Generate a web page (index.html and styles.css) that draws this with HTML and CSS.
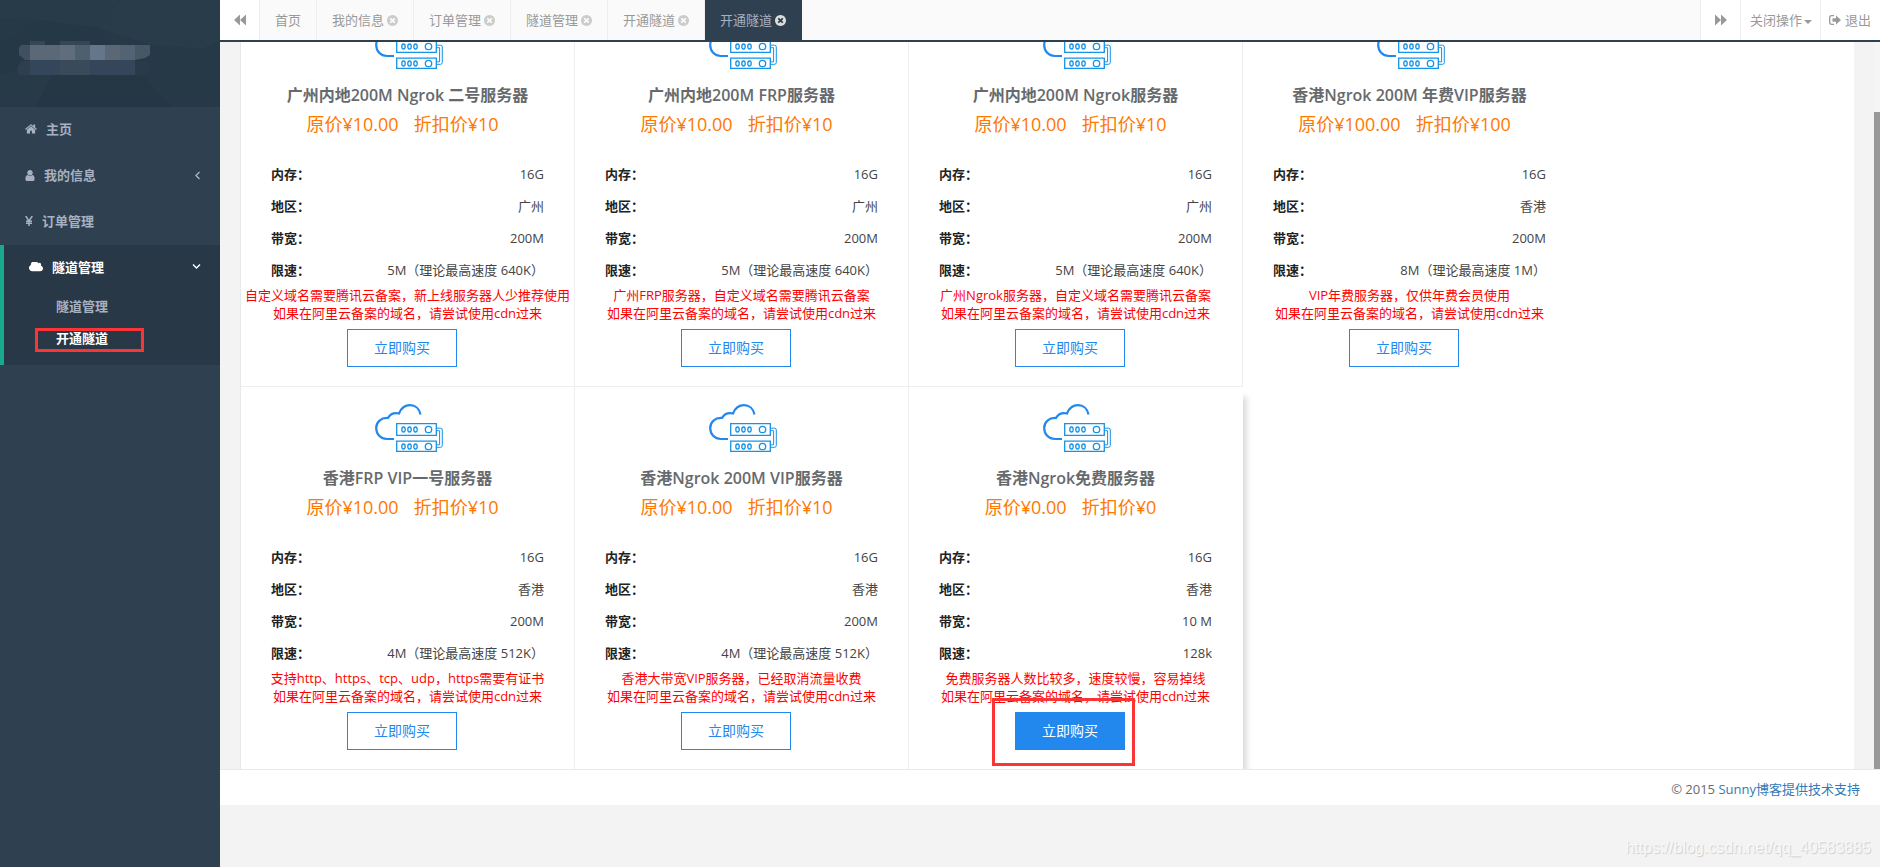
FILE: index.html
```html
<!DOCTYPE html>
<html lang="zh-CN">
<head>
<meta charset="utf-8">
<title>开通隧道</title>
<link rel="stylesheet" href="styles.css">
</head>
<body>
<svg class="sprite" aria-hidden="true">
  <symbol id="i-close" viewBox="128 128 1536 1536"><path d="M1277 1122q0-26-19-45l-181-181 181-181q19-19 19-45 0-27-19-46l-90-90q-19-19-46-19-26 0-45 19l-181 181-181-181q-19-19-45-19-27 0-46 19l-90 90q-19 19-19 46 0 26 19 45l181 181-181 181q-19 19-19 45 0 27 19 46l90 90q19 19 46 19 26 0 45-19l181-181 181 181q19 19 45 19 27 0 46-19l90-90q19-19 19-46zm387-226q0 209-103 385.5t-279.5 279.5-385.5 103-385.5-103-279.5-279.5-103-385.5 103-385.5 279.5-279.5 385.5-103 385.5 103 279.5 279.5 103 385.5z"/></symbol>
  <symbol id="i-server" viewBox="0 0 68 48">
    <path d="M19 35H12C5.500 35 1.200 30 1.200 24C1.200 18 6 13.500 13 14C15 10.500 19 8.500 24 9.500C26 4.500 30 1.200 35 1.200C40.500 1.200 44.500 5 45.500 10.500" fill="none" stroke="#2288ee" stroke-width="2.200"/>
    <g fill="none" stroke="#1593e6" stroke-width="1.300">
      <path d="M21.700 19.700H61.300V31.300H21.700ZM21.700 37.200H61.300V47.300H21.700Z"/>
      <path d="M61.500 24.200H65.500Q67.300 24.200 67.300 26V41.500Q67.300 43.300 65.500 43.300H61.500M61.500 26.700H64.600V40.800H61.500" stroke-width="1"/>
      <ellipse cx="28.500" cy="25.500" rx="1.700" ry="2.500"/><ellipse cx="34.500" cy="25.500" rx="1.700" ry="2.500"/><ellipse cx="40.500" cy="25.500" rx="1.700" ry="2.500"/><circle cx="53.500" cy="25.500" r="3.200"/>
      <ellipse cx="28.500" cy="42.500" rx="1.700" ry="2.500"/><ellipse cx="34.500" cy="42.500" rx="1.700" ry="2.500"/><ellipse cx="40.500" cy="42.500" rx="1.700" ry="2.500"/><circle cx="53.500" cy="42.500" r="3.200"/>
    </g>
  </symbol>
</svg>
<div class="app">
  <aside class="sidebar">
    <div class="profile">
      <svg class="pattern" viewBox="0 0 220 107" preserveAspectRatio="none" aria-hidden="true">
        <path fill="#273b49" d="M0 0H120L98 28L50 22L0 18Z"/>
        <path fill="#283c4a" d="M120 0H220V50L150 45L98 28Z"/>
        <path fill="#253846" d="M0 42L40 20L98 28L112 42L60 60L0 75Z"/>
        <path fill="#273a48" d="M0 75L60 60L36 107H0Z"/>
        <path fill="#253745" d="M60 60L145 78L172 107H36Z"/>
        <path fill="#263947" d="M145 78L220 40V107H172Z"/>
      </svg>
      <svg class="mosaic" viewBox="0 0 136 34" aria-hidden="true">
        <path fill="#40505e" d="M4 4H13V19H8L2 14V7Z"/>
        <path fill="#354655" d="M13 0H28V4H13ZM43 0H73V4H43Z"/>
        <path fill="#5a6877" d="M13 4H58V19H13Z"/><path fill="#606e7b" d="M43 4H58V19H43Z"/>
        <path fill="#4e5f70" d="M58 4H73V19H58Z"/><path fill="#64778a" d="M73 4H88V19H73Z"/>
        <path fill="#5b6774" d="M88 4H103V19H88Z"/><path fill="#526473" d="M103 4H118V19H103Z"/>
        <path fill="#465866" d="M118 4H133V14L128 17L118 19Z"/>
        <path fill="#2e3f50" d="M4 20L13 19V34H2L0 27Z"/><path fill="#33465a" d="M13 19H43V34H13Z"/>
        <path fill="#394b5b" d="M43 19H73V34H43Z"/><path fill="#34475a" d="M73 19H118V34H73Z"/>
        <path fill="#293b4b" d="M118 20H130L134 27L130 34H118Z"/>
      </svg>
    </div>
    <nav>
      <a class="item" href="#"><svg class="i-home" viewBox="64 224 1664 1344"><path d="M1472 992v480q0 26-19 45t-45 19h-384v-384h-256v384h-384q-26 0-45-19t-19-45v-480q0-1 .5-3t.5-3l575-474 575 474q1 2 1 6zm223-69l-62 74q-8 9-21 11h-3q-13 0-21-7l-692-577-692 577q-12 8-24 7-13-2-21-11l-62-74q-8-10-7-23.5t11-21.5l719-599q32-26 76-26t76 26l244 204v-195q0-14 9-23t23-9h192q14 0 23 9t9 23v408l219 182q10 8 11 21.500t-7 23.500z"/></svg>主页</a>
      <a class="item" href="#"><svg class="i-user" viewBox="256 128 1280 1536"><path d="M1536 1399q0 109-62.500 187t-150.500 78h-854q-88 0-150.500-78t-62.500-187q0-85 8.500-160.500t31.500-152 58.500-131 94-89 134.500-34.500q131 128 313 128t313-128q76 0 134.500 34.500t94 89 58.500 131 31.500 152 8.500 160.500zm-256-887q0 159-112.500 271.500t-271.500 112.500-271.500-112.500-112.500-271.500 112.500-271.500 271.500-112.500 271.500 112.500 112.500 271.500z"/></svg>我的信息<svg class="arrow" viewBox="0 0 7 9"><path d="M5.500 1L2 4.500L5.500 8"/></svg></a>
      <a class="item" href="#"><svg class="i-yen" viewBox="0 0 8 10"><path d="M.7 0L4 5L7.300 0M4 4.500V10M1 5.200H7M1 7.300H7" fill="none" stroke="currentColor" stroke-width="1.500"/></svg>订单管理</a>
      <div class="active">
        <a class="item" href="#"><svg class="i-cloud" viewBox="-64 384 1920 1152"><path d="M1856 1152q0 159-112.500 271.500t-271.500 112.500h-1088q-185 0-316.500-131.500t-131.500-316.500q0-132 71-241.500t187-163.500q-2-28-2-43 0-212 150-362t362-150q158 0 286.500 88t187.500 230q70-62 166-62 106 0 181 75t75 181q0 75-41 138 129 30 213 134.500t84 239.500z"/></svg>隧道管理<svg class="arrow down" viewBox="0 0 9 7"><path d="M1 1.500L4.500 5L8 1.500"/></svg></a>
        <a class="sub" href="#">隧道管理</a>
        <a class="sub current" href="#">开通隧道<span class="mark mark-menu"></span></a>
      </div>
    </nav>
  </aside>

  <div class="main">
    <header class="tabs">
      <button class="roll" aria-label="左移"><svg viewBox="0 0 12 12"><path d="M6 .5V11.500L0 6ZM12 .5V11.500L6 6Z"/></svg></button>
      <div class="tablist">
        <a class="tab" href="#">首页</a>
        <a class="tab" href="#">我的信息<svg><use href="#i-close"/></svg></a>
        <a class="tab" href="#">订单管理<svg><use href="#i-close"/></svg></a>
        <a class="tab" href="#">隧道管理<svg><use href="#i-close"/></svg></a>
        <a class="tab" href="#">开通隧道<svg><use href="#i-close"/></svg></a>
        <a class="tab on" href="#">开通隧道<svg><use href="#i-close"/></svg></a>
      </div>
      <button class="roll right" aria-label="右移"><svg viewBox="0 0 12 12"><path d="M0 .5V11.500L6 6ZM6 .5V11.500L12 6Z"/></svg></button>
      <button class="ops">关闭操作<span class="caret"></span></button>
      <a class="exit" href="#"><svg viewBox="0 0 12 10"><path d="M5 .700H2.500Q.7.700.7 2.500V7.500Q.7 9.300 2.500 9.300H5" fill="none" stroke="currentColor" stroke-width="1.300"/><path d="M3.500 3.200H7V.5L12 5L7 9.500V6.800H3.500Z"/></svg>退出</a>
    </header>

    <main class="viewport">
      <div class="panel">
        <section class="card">
          <svg class="server"><use href="#i-server"/></svg>
          <h3>广州内地200M Ngrok 二号服务器</h3>
          <p class="price"><span>原价¥10.00</span><span>折扣价¥10</span></p>
          <dl><div><dt>内存：</dt><dd>16G</dd></div><div><dt>地区：</dt><dd>广州</dd></div><div><dt>带宽：</dt><dd>200M</dd></div><div><dt>限速：</dt><dd>5M（理论最高速度 640K）</dd></div></dl>
          <p class="note">自定义域名需要腾讯云备案，新上线服务器人少推荐使用<br>如果在阿里云备案的域名，请尝试使用cdn过来</p>
          <div class="buy"><button>立即购买</button></div>
        </section>
        <section class="card">
          <svg class="server"><use href="#i-server"/></svg>
          <h3>广州内地200M FRP服务器</h3>
          <p class="price"><span>原价¥10.00</span><span>折扣价¥10</span></p>
          <dl><div><dt>内存：</dt><dd>16G</dd></div><div><dt>地区：</dt><dd>广州</dd></div><div><dt>带宽：</dt><dd>200M</dd></div><div><dt>限速：</dt><dd>5M（理论最高速度 640K）</dd></div></dl>
          <p class="note">广州FRP服务器，自定义域名需要腾讯云备案<br>如果在阿里云备案的域名，请尝试使用cdn过来</p>
          <div class="buy"><button>立即购买</button></div>
        </section>
        <section class="card">
          <svg class="server"><use href="#i-server"/></svg>
          <h3>广州内地200M Ngrok服务器</h3>
          <p class="price"><span>原价¥10.00</span><span>折扣价¥10</span></p>
          <dl><div><dt>内存：</dt><dd>16G</dd></div><div><dt>地区：</dt><dd>广州</dd></div><div><dt>带宽：</dt><dd>200M</dd></div><div><dt>限速：</dt><dd>5M（理论最高速度 640K）</dd></div></dl>
          <p class="note">广州Ngrok服务器，自定义域名需要腾讯云备案<br>如果在阿里云备案的域名，请尝试使用cdn过来</p>
          <div class="buy"><button>立即购买</button></div>
        </section>
        <section class="card plain">
          <svg class="server"><use href="#i-server"/></svg>
          <h3>香港Ngrok 200M 年费VIP服务器</h3>
          <p class="price"><span>原价¥100.00</span><span>折扣价¥100</span></p>
          <dl><div><dt>内存：</dt><dd>16G</dd></div><div><dt>地区：</dt><dd>香港</dd></div><div><dt>带宽：</dt><dd>200M</dd></div><div><dt>限速：</dt><dd>8M（理论最高速度 1M）</dd></div></dl>
          <p class="note">VIP年费服务器，仅供年费会员使用<br>如果在阿里云备案的域名，请尝试使用cdn过来</p>
          <div class="buy"><button>立即购买</button></div>
        </section>
        <section class="card last">
          <svg class="server"><use href="#i-server"/></svg>
          <h3>香港FRP VIP一号服务器</h3>
          <p class="price"><span>原价¥10.00</span><span>折扣价¥10</span></p>
          <dl><div><dt>内存：</dt><dd>16G</dd></div><div><dt>地区：</dt><dd>香港</dd></div><div><dt>带宽：</dt><dd>200M</dd></div><div><dt>限速：</dt><dd>4M（理论最高速度 512K）</dd></div></dl>
          <p class="note">支持http、https、tcp、udp，https需要有证书<br>如果在阿里云备案的域名，请尝试使用cdn过来</p>
          <div class="buy"><button>立即购买</button></div>
        </section>
        <section class="card last">
          <svg class="server"><use href="#i-server"/></svg>
          <h3>香港Ngrok 200M VIP服务器</h3>
          <p class="price"><span>原价¥10.00</span><span>折扣价¥10</span></p>
          <dl><div><dt>内存：</dt><dd>16G</dd></div><div><dt>地区：</dt><dd>香港</dd></div><div><dt>带宽：</dt><dd>200M</dd></div><div><dt>限速：</dt><dd>4M（理论最高速度 512K）</dd></div></dl>
          <p class="note">香港大带宽VIP服务器，已经取消流量收费<br>如果在阿里云备案的域名，请尝试使用cdn过来</p>
          <div class="buy"><button>立即购买</button></div>
        </section>
        <section class="card plain hover">
          <svg class="server"><use href="#i-server"/></svg>
          <h3>香港Ngrok免费服务器</h3>
          <p class="price"><span>原价¥0.00</span><span>折扣价¥0</span></p>
          <dl><div><dt>内存：</dt><dd>16G</dd></div><div><dt>地区：</dt><dd>香港</dd></div><div><dt>带宽：</dt><dd>10 M</dd></div><div><dt>限速：</dt><dd>128k</dd></div></dl>
          <p class="note">免费服务器人数比较多，速度较慢，容易掉线<br>如果在阿里云备案的域名，请尝试使用cdn过来</p>
          <div class="buy"><button>立即购买</button><span class="mark mark-buy"></span></div>
        </section>
      </div>
      <div class="scrollbar"><div class="thumb"></div></div>
    </main>

    <footer class="footer"><span>© 2015 <a href="#">Sunny博客提供技术支持</a></span></footer>
    <div class="watermark">https://blog.csdn.net/qq_40583885</div>
  </div>
</div>
</body>
</html>
```
FILE: styles.css
```css
* { box-sizing: border-box; }
body {
  margin: 0;
  font: 13px/18px "Open Sans", "Noto Sans CJK SC", sans-serif;
  color: #676a6c;
  background: #f3f3f4;
}
a { text-decoration: none; color: inherit; }
button { font: inherit; color: inherit; padding: 0; border: 0; background: none; cursor: pointer; }
h3, p, dl, dd { margin: 0; }
svg { fill: currentColor; flex: none; }
.sprite { position: absolute; width: 0; height: 0; }

.app { display: flex; height: 100vh; overflow: hidden; }

/* sidebar */
.sidebar { flex: 0 0 220px; background: #2f4050; color: #a7b1c2; }
.profile { position: relative; height: 107px; padding: 41px 17px; background: #263947; overflow: hidden; }
.pattern { position: absolute; inset: 0; width: 100%; height: 100%; }
.mosaic { position: relative; display: block; width: 136px; height: 34px; }
.item { display: flex; align-items: center; height: 46px; padding: 0 19px 2px 25px; font-weight: 600; }
.i-home { width: 12px; height: 10px; margin-right: 9px; }
.i-user { width: 10px; height: 11px; margin-right: 9px; }
.i-yen { width: 8px; height: 10px; margin-right: 9px; }
.i-cloud { width: 14px; height: 10px; margin-right: 9px; }
.arrow { width: 7px; height: 9px; margin-left: auto; }
.arrow.down { width: 9px; height: 7px; }
.arrow path { fill: none; stroke: currentColor; stroke-width: 1.400; }
.active { border-left: 4px solid #19aa8d; background: #293846; padding-bottom: 11px; }
.active .item { height: 45px; color: #fff; }
.sub { position: relative; display: block; padding-left: 52px; line-height: 32px; font-weight: 600; }
.sub.current { color: #fff; }
.mark { position: absolute; border: 3px solid #fb3535; pointer-events: none; }
.mark-menu { left: 31px; top: 6px; width: 109px; height: 24px; }

/* tab bar */
.main { flex: 1; min-width: 0; display: flex; flex-direction: column; }
.tabs { flex: none; display: flex; height: 42px; border-bottom: 2px solid #2f4050; background: #fafafa; color: #999; line-height: 40px; }
.roll { display: flex; align-items: center; justify-content: center; width: 40px; background: #fff; border-right: 1px solid #eee; }
.roll.right { border-left: 1px solid #eee; border-right: 0; }
.roll svg { width: 12px; height: 12px; }
.tablist { flex: 1; display: flex; }
.tab { display: flex; align-items: center; padding: 0 15px; border-right: 1px solid #eee; }
.tab svg { width: 11px; height: 11px; margin-left: 3px; color: #ccc; }
.tab.on { background: #2f4050; color: #a7b1c2; border-color: #2f4050; }
.tab.on svg { color: #ddd; }
.ops { display: flex; align-items: center; width: 80px; padding-left: 9px; background: #fff; border-left: 1px solid #eee; }
.caret { margin: 3px 0 0 2px; border: 4px solid transparent; border-top-color: #999; border-bottom: 0; }
.exit { display: flex; align-items: center; width: 60px; padding-left: 8px; background: #fff; border-left: 1px solid #eee; }
.exit svg { width: 12px; height: 10px; margin-right: 4px; }

/* the list is scrolled to its end */
.viewport { flex: 1; min-height: 0; display: flex; align-items: flex-end; padding-left: 20px; overflow: hidden; }
.panel { flex: 1; display: flex; flex-wrap: wrap; background: #fff; border-left: 1px solid #e7eaec; margin: 0 20px -1px 0; }
.card { width: 334px; padding: 17px 30px 19px; border: solid #eee; border-width: 0 1px 1px 0; text-align: center; }
.card.last { border-bottom-color: transparent; }
.card.plain { border-color: transparent; }
.card.hover { box-shadow: 6px 8px 6px -2px rgba(0, 0, 0, .14); }
.server { display: block; width: 68px; height: 48px; margin: 0 auto 0 104px; }
.card h3 { margin: 14px -20px 0; font-size: 16px; line-height: 24px; font-weight: 600; }
.price { display: flex; justify-content: center; gap: 15px; margin: 3px 0 20px; padding-right: 10px; font-size: 18px; line-height: 28px; color: #ff7800; }
dl div { display: flex; justify-content: space-between; line-height: 32px; }
dt { font-weight: 600; color: #222; }
dd { color: #444; }
.note { margin: 0 -30px; color: #f00; }
.buy { position: relative; width: 110px; margin: 7px auto 0 76px; }
.buy button { display: block; width: 100%; height: 38px; border: 1px solid #2288ee; color: #2288ee; font-size: 14px; line-height: 36px; }
.hover button { background: #2288ee; color: #fff; }
.mark-buy { inset: -14px -10px -16px -23px; }
.scrollbar { align-self: stretch; width: 6px; padding-top: 70px; background: #f5f5f5; }
.thumb { height: 100%; background: #999; }

.footer { flex: none; display: flex; justify-content: flex-end; align-items: center; height: 36px; padding: 2px 20px 0 0; background: #fff; border-top: 1px solid #e7eaec; position: relative; }
.footer a { color: #337ab7; }
.watermark { flex: none; height: 62px; padding: 32px 9px 0; text-align: right; font: 16px/22px "Liberation Sans", sans-serif; color: #f8f8f8; text-shadow: 1px 1px 1px #ccc; }
```
